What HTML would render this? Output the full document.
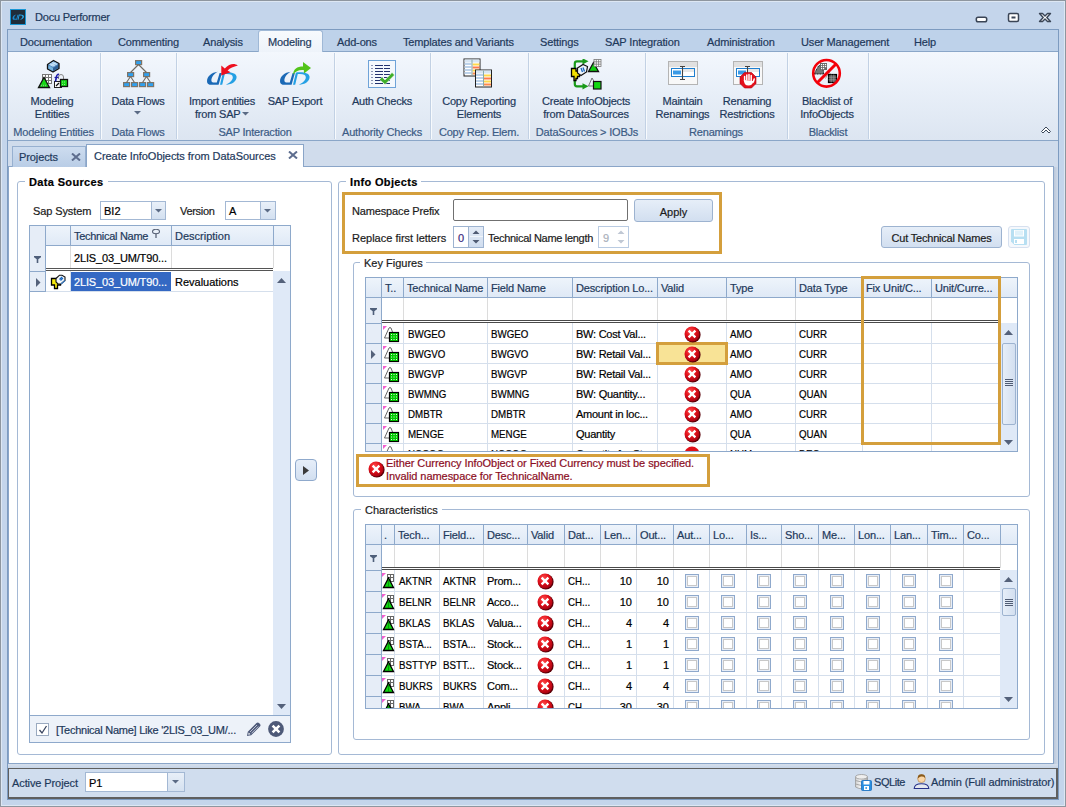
<!DOCTYPE html><html><head><meta charset="utf-8"><title>Docu Performer</title><style>
*{margin:0;padding:0;box-sizing:border-box}
html,body{width:1066px;height:807px;overflow:hidden;background:#c4d5eb;font-family:"Liberation Sans",sans-serif;font-size:11px;color:#1e395b}
.a{position:absolute}
.t{white-space:nowrap;line-height:13px;height:13px;-webkit-text-stroke:0.2px currentColor}
.nv{color:#1e395b}
.bk{color:#000}
.gl{color:#3b5b85}
.u{transform:scaleX(.885);transform-origin:0 0}
</style></head><body><div class="a " style="left:0px;top:0px;width:1066px;height:807px;border:1px solid #8e969f;background:#c4d5eb"></div>
<div class="a " style="left:1px;top:1px;width:1064px;height:805px;border:1px solid #dde7f3"></div>
<svg class="a" style="left:10px;top:9px" width="16" height="16" viewBox="0 0 16 16"><rect x="0" y="0" width="16" height="16" fill="#1996d4"/><rect x="1" y="1" width="14" height="14" fill="#1f2d3a"/><path d="M6.5 5.5 C4 5.8 2.5 7.5 2.5 9.3 C2.5 10.3 3.2 10.8 4.2 10.8 L7 10.8 L8.4 5.8 L7.5 5.8 L6.4 9.8 L4.9 9.8 C4.4 9.8 4.2 9.5 4.2 9.1 C4.2 7.7 5.1 6.3 6.5 5.5Z" fill="#1a8ad0"/><path d="M8.7 5.8 L9.6 5.8 L8.5 10.8 L7.6 10.8Z M8.9 5.5 C12 5.2 14 5.8 14 7.6 C14 9.6 12 10.6 9.6 10.8 C11 10 12.4 9 12.4 7.7 C12.4 6.6 11 6.2 8.9 6.5Z" fill="#2aa6e8"/></svg>
<div class="a t " style="left:35px;top:11px;color:#1e395b;letter-spacing:-0.2px">Docu Performer</div>
<svg class="a" style="left:970px;top:8px" width="90" height="18" viewBox="0 0 90 18"><rect x="6.3" y="9.3" width="10.4" height="4.4" rx="1.8" fill="#fff" stroke="#3a4556" stroke-width="1.5"/><rect x="38.5" y="5.5" width="10" height="8" rx="1.5" fill="#fff" stroke="#3a4556" stroke-width="1.5"/><rect x="41.5" y="8.5" width="4" height="2" fill="#3a4556"/><path d="M69.5 5.5 L72.5 5.5 L75 8 L77.5 5.5 L80.5 5.5 L76.8 9.5 L80.5 13.5 L77.5 13.5 L75 11 L72.5 13.5 L69.5 13.5 L73.2 9.5 Z" fill="#fff" stroke="#3a4556" stroke-width="1.4" stroke-linejoin="round"/></svg>
<div class="a " style="left:7px;top:29px;width:1052px;height:771px;border:1px solid #7d9bc0;background:#c4d5eb"></div>
<div class="a " style="left:8px;top:30px;width:1050px;height:21px;background:#bed2ea"></div>
<div class="a " style="left:8px;top:51px;width:1050px;height:1px;background:#8aa6c8"></div>
<div class="a " style="left:258px;top:30px;width:65px;height:22px;background:linear-gradient(#f7fafd,#eef3fa);border:1px solid #9fb8d6;border-bottom:0;border-radius:3px 3px 0 0"></div>
<div class="a t " style="left:20px;top:36px;letter-spacing:-0.15px">Documentation</div>
<div class="a t " style="left:118px;top:36px;letter-spacing:-0.15px">Commenting</div>
<div class="a t " style="left:203px;top:36px;letter-spacing:-0.15px">Analysis</div>
<div class="a t " style="left:268px;top:36px;letter-spacing:-0.15px">Modeling</div>
<div class="a t " style="left:337px;top:36px;letter-spacing:-0.15px">Add-ons</div>
<div class="a t " style="left:403px;top:36px;letter-spacing:-0.15px">Templates and Variants</div>
<div class="a t " style="left:540px;top:36px;letter-spacing:-0.15px">Settings</div>
<div class="a t " style="left:605px;top:36px;letter-spacing:-0.15px">SAP Integration</div>
<div class="a t " style="left:707px;top:36px;letter-spacing:-0.15px">Administration</div>
<div class="a t " style="left:801px;top:36px;letter-spacing:-0.15px">User Management</div>
<div class="a t " style="left:914px;top:36px;letter-spacing:-0.15px">Help</div>
<div class="a " style="left:8px;top:52px;width:1050px;height:88px;background:linear-gradient(#f3f7fd,#e8eff8 45%,#dce5f1)"></div>
<div class="a " style="left:8px;top:140px;width:1050px;height:1px;background:#8aa6c8"></div>
<div class="a " style="left:100px;top:53px;width:1px;height:86px;background:#c2d1e4"></div>
<div class="a " style="left:101px;top:53px;width:1px;height:86px;background:#f7fafd"></div>
<div class="a " style="left:176px;top:53px;width:1px;height:86px;background:#c2d1e4"></div>
<div class="a " style="left:177px;top:53px;width:1px;height:86px;background:#f7fafd"></div>
<div class="a " style="left:334px;top:53px;width:1px;height:86px;background:#c2d1e4"></div>
<div class="a " style="left:335px;top:53px;width:1px;height:86px;background:#f7fafd"></div>
<div class="a " style="left:430px;top:53px;width:1px;height:86px;background:#c2d1e4"></div>
<div class="a " style="left:431px;top:53px;width:1px;height:86px;background:#f7fafd"></div>
<div class="a " style="left:528px;top:53px;width:1px;height:86px;background:#c2d1e4"></div>
<div class="a " style="left:529px;top:53px;width:1px;height:86px;background:#f7fafd"></div>
<div class="a " style="left:645px;top:53px;width:1px;height:86px;background:#c2d1e4"></div>
<div class="a " style="left:646px;top:53px;width:1px;height:86px;background:#f7fafd"></div>
<div class="a " style="left:787px;top:53px;width:1px;height:86px;background:#c2d1e4"></div>
<div class="a " style="left:788px;top:53px;width:1px;height:86px;background:#f7fafd"></div>
<div class="a " style="left:868px;top:53px;width:1px;height:86px;background:#c2d1e4"></div>
<div class="a " style="left:869px;top:53px;width:1px;height:86px;background:#f7fafd"></div>
<div class="a t " style="left:-98px;width:300px;text-align:center;top:95px;letter-spacing:-0.2px">Modeling</div>
<div class="a t " style="left:-98px;width:300px;text-align:center;top:108px;letter-spacing:-0.2px">Entities</div>
<div class="a t " style="left:72px;width:300px;text-align:center;top:95px;letter-spacing:-0.2px">Import entities</div>
<div class="a t " style="left:145px;width:300px;text-align:center;top:95px;letter-spacing:-0.2px">SAP Export</div>
<div class="a t " style="left:232px;width:300px;text-align:center;top:95px;letter-spacing:-0.2px">Auth Checks</div>
<div class="a t " style="left:329px;width:300px;text-align:center;top:95px;letter-spacing:-0.2px">Copy Reporting</div>
<div class="a t " style="left:329px;width:300px;text-align:center;top:108px;letter-spacing:-0.2px">Elements</div>
<div class="a t " style="left:436px;width:300px;text-align:center;top:95px;letter-spacing:-0.2px">Create InfoObjects</div>
<div class="a t " style="left:436px;width:300px;text-align:center;top:108px;letter-spacing:-0.2px">from DataSources</div>
<div class="a t " style="left:532.5px;width:300px;text-align:center;top:95px;letter-spacing:-0.2px">Maintain</div>
<div class="a t " style="left:532.5px;width:300px;text-align:center;top:108px;letter-spacing:-0.2px">Renamings</div>
<div class="a t " style="left:597px;width:300px;text-align:center;top:95px;letter-spacing:-0.2px">Renaming</div>
<div class="a t " style="left:597px;width:300px;text-align:center;top:108px;letter-spacing:-0.2px">Restrictions</div>
<div class="a t " style="left:677px;width:300px;text-align:center;top:95px;letter-spacing:-0.2px">Blacklist of</div>
<div class="a t " style="left:677px;width:300px;text-align:center;top:108px;letter-spacing:-0.2px">InfoObjects</div>
<div class="a t " style="left:-12px;width:300px;text-align:center;top:95px;letter-spacing:-0.2px">Data Flows</div>
<div class="a t " style="left:195px;top:108px;letter-spacing:-0.2px">from SAP</div>
<svg class="a" style="left:134px;top:111px" width="7" height="4"><path d="M0 0 H7 L3.5 3.5Z" fill="#5b6b85"/></svg>
<svg class="a" style="left:242px;top:112px" width="7" height="4"><path d="M0 0 H7 L3.5 3.5Z" fill="#5b6b85"/></svg>
<div class="a t gl" style="left:-96.5px;width:300px;text-align:center;top:126px;letter-spacing:-0.2px">Modeling Entities</div>
<div class="a t gl" style="left:-12px;width:300px;text-align:center;top:126px;letter-spacing:-0.2px">Data Flows</div>
<div class="a t gl" style="left:105px;width:300px;text-align:center;top:126px;letter-spacing:-0.2px">SAP Interaction</div>
<div class="a t gl" style="left:232px;width:300px;text-align:center;top:126px;letter-spacing:-0.2px">Authority Checks</div>
<div class="a t gl" style="left:329px;width:300px;text-align:center;top:126px;letter-spacing:-0.2px">Copy Rep. Elem.</div>
<div class="a t gl" style="left:437px;width:300px;text-align:center;top:126px;letter-spacing:-0.2px">DataSources &gt; IOBJs</div>
<div class="a t gl" style="left:566px;width:300px;text-align:center;top:126px;letter-spacing:-0.2px">Renamings</div>
<div class="a t gl" style="left:678px;width:300px;text-align:center;top:126px;letter-spacing:-0.2px">Blacklist</div>
<svg class="a" style="left:1040px;top:125px" width="12" height="9" viewBox="0 0 12 9"><path d="M1.5 6.5 L6 2 L10.5 6.5 L9 8 L6 5 L3 8 Z" fill="#fff" stroke="#3c4a5c" stroke-width="1" stroke-linejoin="round"/></svg>
<svg class="a" style="left:36px;top:58px" width="34" height="32" viewBox="0 0 34 32"><path d="M11.5 6.5 L17.5 2.5 L23 5.5 L23 10.5 L17 14 L11.5 11 Z" fill="#4f86bd" stroke="#111" stroke-width="1.3" stroke-linejoin="round"/><path d="M12.5 6.5 L17.5 3.5 L22 5.8 L17 9 Z" fill="#9cc6ea"/><path d="M14 6 L19 8 M16 4.5 L21 6.5 M14.5 8 L19.5 5" stroke="#d8ecfa" stroke-width="0.7"/><path d="M12.5 7.5 L17 10 V13 L12.5 10.5Z" fill="#78b4dc"/><path d="M17 10 L22 7 V10 L17 13Z" fill="#2f5f94"/><g fill="#fff" stroke="#777" stroke-width="1"><rect x="6.5" y="16.5" width="9" height="9"/><path d="M6.5 19.5H15.5M6.5 22.5H15.5M9.5 16.5V25.5M12.5 16.5V25.5"/></g><path d="M2.5 29.5 L8 19.5 L13.5 29.5 Z" fill="#14d814" stroke="#111" stroke-width="1.3"/><path d="M5 27.5 H11" stroke="#7fbf7f" stroke-width="1.5" stroke-dasharray="1 1"/><path d="M22.5 21 V19 Q22.5 16.5 25 16.5 Q27.5 16.5 27.5 19 V21" fill="none" stroke="#888" stroke-width="1"/><rect x="18.5" y="23.5" width="7" height="6" fill="#fff" stroke="#222"/><path d="M20 28 L23 25" stroke="#111" stroke-width="1.2"/><rect x="24.5" y="21.5" width="7" height="7" fill="#18d818" stroke="#111" stroke-width="1.3"/><path d="M26 24 H30 M26 26.5 H30" stroke="#b8f5b8" stroke-width="0.7" stroke-dasharray="1 1"/><path d="M23 16.5 Q21 16 20.5 18.5 L19.5 23.5" fill="none" stroke="#1a1aa8" stroke-width="1.6"/><path d="M18.5 19.5H22.5" stroke="#1a1aa8" stroke-width="1.2"/></svg>
<svg class="a" style="left:122px;top:59px" width="34" height="30" viewBox="0 0 34 30"><g fill="#2fa0f0" stroke="#7d7468" stroke-width="1.2"><rect x="13.6" y="1.6" width="6" height="4"/><rect x="5.6" y="13.6" width="6" height="4"/><rect x="21.6" y="13.6" width="6" height="4"/><rect x="1.6" y="23.6" width="6" height="4"/><rect x="9.6" y="23.6" width="6" height="4"/><rect x="17.6" y="23.6" width="6" height="4"/><rect x="25.6" y="23.6" width="6" height="4"/></g><path d="M16.5 5.5 L8.5 13.5 M16.5 5.5 L24.5 13.5 M8.5 17.5 L4.5 23.5 M8.5 17.5 L12.5 23.5 M24.5 17.5 L20.5 23.5 M24.5 17.5 L28.5 23.5" stroke="#6f6a62" stroke-width="1.1"/></svg>
<svg class="a" style="left:203px;top:60px" width="40" height="28" viewBox="0 0 40 28"><path d="M14.8 11.8 C8.5 12.5 4 16.5 4 21.2 C4 23.8 5.8 24.8 8.5 24.8 L15.6 24.8 L18.9 13 L16.6 13 L13.8 22.4 L10.2 22.4 C9 22.4 8.4 21.6 8.4 20.6 C8.4 17 11 13.8 14.8 11.8 Z" fill="#1a69b6"/><path d="M19.8 13 L22 13 L19.2 24.8 L17 24.8 Z" fill="#24a0e4"/><path d="M20.3 12.3 C28 11.6 33.6 13 33.6 17 C33.6 21.5 29 24.5 22.8 24.8 C26.5 22.8 29.8 20.5 29.8 17.2 C29.8 14.6 26.5 13.6 20.6 14.3 Z" fill="#24a0e4"/><path d="M18.3 5.5 L18.3 15.6 L27.6 12.3 L24.6 10.6 C27 7.8 30.5 6.6 34.8 5.4 C31.5 3 26.5 3.2 21.8 8.6 Z" fill="#ee1020"/></svg>
<svg class="a" style="left:276px;top:60px" width="40" height="28" viewBox="0 0 40 28"><path d="M14.8 11.8 C8.5 12.5 4 16.5 4 21.2 C4 23.8 5.8 24.8 8.5 24.8 L15.6 24.8 L18.9 13 L16.6 13 L13.8 22.4 L10.2 22.4 C9 22.4 8.4 21.6 8.4 20.6 C8.4 17 11 13.8 14.8 11.8 Z" fill="#1a69b6"/><path d="M19.8 13 L22 13 L19.2 24.8 L17 24.8 Z" fill="#24a0e4"/><path d="M20.3 12.3 C28 11.6 33.6 13 33.6 17 C33.6 21.5 29 24.5 22.8 24.8 C26.5 22.8 29.8 20.5 29.8 17.2 C29.8 14.6 26.5 13.6 20.6 14.3 Z" fill="#24a0e4"/><path d="M17 14.8 C17.5 9 21 6.5 27 6.5 L27 2 L35 8 L28 13.5 L27.8 10 C23 9.5 19.5 11 17 14.8Z" fill="#52c41a"/></svg>
<svg class="a" style="left:368px;top:60px" width="28" height="28" viewBox="0 0 28 28"><rect x="0.5" y="0.5" width="27" height="27" fill="#f4f8fd" stroke="#6fa3d8"/><rect x="3.5" y="5" width="1" height="1" fill="#23326e"/><rect x="7" y="5" width="8" height="1" fill="#23326e"/><rect x="16" y="5" width="6" height="1" fill="#23326e"/><rect x="3.5" y="8" width="1" height="1" fill="#23326e"/><rect x="7" y="8" width="8" height="1" fill="#23326e"/><rect x="16" y="8" width="6" height="1" fill="#23326e"/><rect x="3.5" y="11" width="1" height="1" fill="#23326e"/><rect x="7" y="11" width="8" height="1" fill="#23326e"/><rect x="16" y="11" width="6" height="1" fill="#23326e"/><rect x="3.5" y="14" width="1" height="1" fill="#23326e"/><rect x="7" y="14" width="8" height="1" fill="#23326e"/><rect x="16" y="14" width="6" height="1" fill="#23326e"/><rect x="3.5" y="17" width="1" height="1" fill="#23326e"/><rect x="7" y="17" width="8" height="1" fill="#23326e"/><rect x="16" y="17" width="6" height="1" fill="#23326e"/><rect x="3.5" y="20" width="1" height="1" fill="#23326e"/><rect x="7" y="20" width="8" height="1" fill="#23326e"/><rect x="16" y="20" width="6" height="1" fill="#23326e"/><rect x="3.5" y="23" width="1" height="1" fill="#23326e"/><rect x="7" y="23" width="8" height="1" fill="#23326e"/><rect x="16" y="23" width="6" height="1" fill="#23326e"/><path d="M11.5 19.5 L14 17 L17 20 L24 12.5 L26.5 15 L17 24.5 Z" fill="#3fae2a" stroke="#fff" stroke-width="0.5"/></svg>
<svg class="a" style="left:463px;top:58px" width="31" height="31" viewBox="0 0 31 31"><g transform="translate(0.5,0.5)"><rect x="0.5" y="0.5" width="16" height="17" fill="#fff" stroke="#222"/><rect x="1" y="1" width="15" height="3" fill="#d8e6f4"/><rect x="1" y="4.5" width="7" height="2" fill="#bcd2ea"/><rect x="1" y="7.5" width="7" height="2" fill="#bcd2ea"/><rect x="1" y="10.5" width="7" height="2" fill="#bcd2ea"/><rect x="1" y="13.5" width="7" height="2" fill="#bcd2ea"/><rect x="9" y="5" width="7" height="2" fill="#ffd84a"/><rect x="9" y="8" width="7" height="2" fill="#ff7a4a"/><rect x="9" y="11" width="7" height="2" fill="#ffd84a"/><rect x="9" y="14" width="7" height="2" fill="#ff8a4a"/><path d="M8.5 1 V17" stroke="#8aa"/></g><g transform="translate(12,11.5)"><rect x="0.5" y="0.5" width="16" height="17" fill="#fff" stroke="#222"/><rect x="1" y="1" width="15" height="3" fill="#d8e6f4"/><rect x="1" y="4.5" width="7" height="2" fill="#bcd2ea"/><rect x="1" y="7.5" width="7" height="2" fill="#bcd2ea"/><rect x="1" y="10.5" width="7" height="2" fill="#bcd2ea"/><rect x="1" y="13.5" width="7" height="2" fill="#bcd2ea"/><rect x="9" y="5" width="7" height="2" fill="#ffd84a"/><rect x="9" y="8" width="7" height="2" fill="#ff7a4a"/><rect x="9" y="11" width="7" height="2" fill="#ffd84a"/><rect x="9" y="14" width="7" height="2" fill="#ff8a4a"/><path d="M8.5 1 V17" stroke="#8aa"/></g></svg>
<svg class="a" style="left:570px;top:59px" width="33" height="33" viewBox="0 0 33 33"><path d="M4.8 10.5 V4.5 Q4.8 2.3 7 2.3 H13.5" fill="none" stroke="#1a9a1a" stroke-width="2.2"/><path d="M12.5 -0.8 L18.5 2.3 L12.5 5.4Z" fill="#1a9a1a"/><path d="M4.8 21.5 V25 Q4.8 27.3 7 27.3 H13.5" fill="none" stroke="#1a9a1a" stroke-width="2.2"/><path d="M12.5 24.2 L18.5 27.3 L12.5 30.4Z" fill="#1a9a1a"/><path d="M1.5 9.5 H6 V12 H9.5 V17.5 L7.5 17.5 V19.5 H6 V21.5 H4 V17.5 H1.5Z" fill="#f2e000" stroke="#000" stroke-width="1.3"/><path d="M7.5 9 L13 5.5 L17.5 7.5 L16.5 13 L11 16.5 L7.5 14Z" fill="#eef4fa" stroke="#111" stroke-width="1.2"/><path d="M11 9 L12.5 13 M13 8.5 L14.5 12.5" stroke="#1565c0" stroke-width="1.3"/><path d="M18.5 12.5 L23.5 3.5 L28.5 12.5Z" fill="#10d010" stroke="#111" stroke-width="1.3"/><g fill="#fff" stroke="#777" stroke-width="0.8"><rect x="24" y="0.5" width="7" height="7"/><path d="M24 2.8H31M24 5.2H31M26.3 0.5V7.5M28.6 0.5V7.5"/></g><path d="M18.5 27 L22 19 L25 24" fill="none" stroke="#666" stroke-width="0.9"/><path d="M18.5 27 H23" stroke="#666" stroke-width="0.9"/><rect x="23.5" y="22.5" width="7.5" height="7.5" fill="#12d812" stroke="#111" stroke-width="1.2"/></svg>
<svg class="a" style="left:668px;top:61px" width="31" height="25" viewBox="0 0 31 25"><rect x="1" y="1" width="29" height="23" fill="#7a7a7a" opacity="0.35"/><rect x="0.5" y="0.5" width="29" height="23" fill="#f8f8f8" stroke="#b4b4b4"/><rect x="1" y="1" width="28" height="5" fill="#e0e0e0"/><rect x="3" y="7" width="24" height="9" fill="#1e7fd0"/><rect x="4" y="8" width="22" height="7" fill="#fff"/><rect x="15" y="8" width="11" height="3" fill="#e8e8e8"/><rect x="5" y="9.5" width="8" height="4" fill="#3a9ae6"/><path d="M12 5.5 H17 M14.5 5.5 V18.5 M12 18.5 H17" stroke="#444" stroke-width="1.1"/></svg>
<svg class="a" style="left:733px;top:61px" width="31" height="28" viewBox="0 0 31 28"><rect x="1" y="1" width="29" height="23" fill="#7a7a7a" opacity="0.35"/><rect x="0.5" y="0.5" width="29" height="23" fill="#f8f8f8" stroke="#b4b4b4"/><rect x="1" y="1" width="28" height="5" fill="#e0e0e0"/><rect x="3" y="7" width="24" height="9" fill="#1e7fd0"/><rect x="4" y="8" width="22" height="7" fill="#fff"/><rect x="15" y="8" width="11" height="3" fill="#e8e8e8"/><rect x="5" y="9.5" width="8" height="4" fill="#3a9ae6"/><path d="M12 5.5 H17 M14.5 5.5 V18.5 M12 18.5 H17" stroke="#444" stroke-width="1.1"/><path d="M11.5 11.5 H18.5 L23 16 V22.5 L18.5 27 H11.5 L7 22.5 V16Z" fill="#e4101c" stroke="#b00010" stroke-width="0.6"/><path d="M11.6 20 V15.5 M13.8 19 V14 M16 19 V13.5 M18.2 19.5 V14.5 M20.3 21 L21.2 18" stroke="#fff" stroke-width="1.5" stroke-linecap="round"/><path d="M10.8 19 Q11 24.5 15.5 24.5 Q19.5 24.5 20.5 20Z" fill="#fff"/></svg>
<svg class="a" style="left:810px;top:57px" width="32" height="32" viewBox="0 0 32 32"><path d="M4 17 L8.5 9 Q9.5 8 10.5 9 L13.5 14 L13.5 17Z" fill="#777" stroke="#111" stroke-width="1" stroke-dasharray="1 0.6"/><rect x="10" y="6" width="7" height="7" fill="#666"/><g fill="#fff"><rect x="11" y="7" width="1.2" height="1.2"/><rect x="13" y="7" width="1.2" height="1.2"/><rect x="15" y="7" width="1.2" height="1.2"/><rect x="11" y="9" width="1.2" height="1.2"/><rect x="13" y="9" width="1.2" height="1.2"/><rect x="15" y="9" width="1.2" height="1.2"/><rect x="11" y="11" width="1.2" height="1.2"/><rect x="13" y="11" width="1.2" height="1.2"/></g><path d="M15.5 21.5 L19 15 L21 18" fill="#fff" stroke="#888" stroke-width="0.8"/><rect x="18.5" y="17.5" width="8" height="8" fill="#555" stroke="#000" stroke-width="1.2"/><path d="M18.5 20.2H26.5M18.5 22.8H26.5M21.2 17.5V25.5M23.8 17.5V25.5" stroke="#aaa" stroke-width="0.6"/><circle cx="16.5" cy="16.3" r="13.3" fill="none" stroke="#f4000a" stroke-width="2.6"/><path d="M7 26 L26 7" stroke="#f4000a" stroke-width="3"/></svg>
<div class="a " style="left:8px;top:141px;width:1050px;height:26px;background:#d0dcec"></div>
<div class="a " style="left:8px;top:166px;width:1046px;height:1px;background:#8aa5c8"></div>
<div class="a " style="left:12px;top:146px;width:74px;height:21px;background:linear-gradient(#cddcef,#b9cde6);border:1px solid #97b0d0;border-bottom:0"></div>
<div class="a t " style="left:19px;top:151px;letter-spacing:-0.1px">Projects</div>
<svg class="a" style="left:71px;top:153px" width="10" height="8" viewBox="0 0 10 8"><path d="M1 0.5 L9 7.5 M9 0.5 L1 7.5" stroke="#5d6d8e" stroke-width="2"/></svg>
<div class="a " style="left:86px;top:144px;width:218px;height:23px;background:#fff;border:1px solid #8aa5c8;border-bottom:0"></div>
<div class="a t " style="left:94px;top:150px;letter-spacing:-0.05px">Create InfoObjects from DataSources</div>
<svg class="a" style="left:288px;top:151px" width="10" height="8" viewBox="0 0 10 8"><path d="M1 0.5 L9 7.5 M9 0.5 L1 7.5" stroke="#5d6d8e" stroke-width="2"/></svg>
<div class="a " style="left:8px;top:167px;width:1046px;height:597px;background:#fff;border:1px solid #8aa5c8;border-top:0"></div>
<div class="a " style="left:1054px;top:167px;width:4px;height:597px;background:linear-gradient(90deg,#bcc8da,#cfdbea)"></div>
<div class="a " style="left:8px;top:764px;width:1050px;height:4px;background:linear-gradient(#d5dfec,#c7d5e7)"></div>
<div class="a " style="left:8px;top:768px;width:1050px;height:31px;background:#d0ddee;border:1px solid #5f5f5f;border-right:2px solid #5f5f5f;border-bottom:2px solid #5f5f5f"></div>
<div class="a t " style="left:12px;top:777px;letter-spacing:-0.1px">Active Project</div>
<div class="a " style="left:85px;top:772px;width:100px;height:20px;background:#fff;border:1px solid #a3b8d4"></div>
<div class="a t " style="left:89px;top:777px;color:#000">P1</div>
<div class="a " style="left:167px;top:773px;width:17px;height:18px;background:linear-gradient(#e8eff8,#d5e1f0);border-left:1px solid #a3b8d4"></div>
<svg class="a" style="left:172px;top:780px" width="7" height="4"><path d="M0 0 H7 L3.5 3.5Z" fill="#5b6b85"/></svg>
<svg class="a" style="left:855px;top:774px" width="18" height="17" viewBox="0 0 18 17"><defs><linearGradient id="dbg" x1="0" x2="1"><stop offset="0" stop-color="#cfcfcf"/><stop offset="0.4" stop-color="#f4f4f4"/><stop offset="1" stop-color="#a8a8a8"/></linearGradient></defs><path d="M0.5 2.8 V13 Q6.5 16.5 12.5 13 V2.8" fill="url(#dbg)" stroke="#9a9a9a" stroke-width="0.8"/><ellipse cx="6.5" cy="2.8" rx="6" ry="2.3" fill="#eee" stroke="#9a9a9a" stroke-width="0.8"/><path d="M0.5 6.5 Q6.5 9.5 12.5 6.5 M0.5 10 Q6.5 13 12.5 10" fill="none" stroke="#9a9a9a" stroke-width="0.8"/><rect x="6.5" y="6.5" width="10" height="10" rx="1" fill="#2a8fe0" stroke="#1a70c0" stroke-width="0.8"/><rect x="8.5" y="7" width="6" height="3.5" fill="#fff"/><rect x="9" y="12" width="5" height="4" fill="#fff"/><rect x="10.5" y="13" width="1.3" height="2" fill="#2a8fe0"/></svg>
<div class="a t " style="left:874px;top:776px;letter-spacing:-0.45px">SQLite</div>
<svg class="a" style="left:913px;top:773px" width="17" height="17" viewBox="0 0 17 17"><path d="M1.2 15.5 Q1.5 10.8 8.5 10.8 Q15.5 10.8 15.8 15.5 Z" fill="#e4e8f0" stroke="#27338a" stroke-width="1.1"/><circle cx="8.5" cy="5.8" r="3.8" fill="#fbd6a6" stroke="#b07a3a" stroke-width="0.6"/><path d="M4.8 5.5 Q4.5 1 8.8 1.3 Q12.5 1.5 12.2 5 Q10.5 3.2 8 3.6 Q6.3 4 4.8 5.5Z" fill="#8a5a1a"/></svg>
<div class="a t " style="left:931px;top:776px;letter-spacing:-0.1px">Admin (Full administrator)</div>
<div class="a " style="left:17px;top:181px;width:315px;height:574px;border:1px solid #a5b9d5;border-radius:3px"></div>
<div class="a " style="left:25px;top:179px;width:83px;height:4px;background:#fff"></div>
<div class="a t " style="left:29px;top:176px;font-weight:bold;color:#000;letter-spacing:0.35px">Data Sources</div>
<div class="a t " style="left:33px;top:205px;letter-spacing:-0.1px;color:#1b1b1b">Sap System</div>
<div class="a " style="left:100px;top:201px;width:66px;height:19px;background:#fff;border:1px solid #a3b8d4"></div>
<div class="a t " style="left:104px;top:205px;color:#000">BI2</div>
<div class="a " style="left:151px;top:202px;width:14px;height:17px;background:linear-gradient(#e9f0f9,#d3e0f0);border-left:1px solid #a3b8d4"></div>
<svg class="a" style="left:155px;top:209px" width="7" height="4"><path d="M0 0 H7 L3.5 3.5Z" fill="#5b6b85"/></svg>
<div class="a t " style="left:180px;top:205px;color:#1b1b1b;letter-spacing:-0.3px">Version</div>
<div class="a " style="left:225px;top:201px;width:51px;height:19px;background:#fff;border:1px solid #a3b8d4"></div>
<div class="a t " style="left:229px;top:205px;color:#000">A</div>
<div class="a " style="left:260px;top:202px;width:15px;height:17px;background:linear-gradient(#e9f0f9,#d3e0f0);border-left:1px solid #a3b8d4"></div>
<svg class="a" style="left:264px;top:209px" width="7" height="4"><path d="M0 0 H7 L3.5 3.5Z" fill="#5b6b85"/></svg>
<div class="a " style="left:29px;top:225px;width:262px;height:491px;background:#fff;border:1px solid #8ea9cb"></div>
<div class="a " style="left:30px;top:226px;width:260px;height:20px;background:linear-gradient(#eef4fb,#dfe9f6)"></div>
<div class="a " style="left:30px;top:245px;width:260px;height:1px;background:#8ea9cb"></div>
<div class="a " style="left:30px;top:226px;width:16px;height:66px;background:#e6edf7"></div>
<div class="a " style="left:45px;top:226px;width:1px;height:20px;background:#8ea9cb"></div>
<div class="a " style="left:70px;top:226px;width:1px;height:20px;background:#8ea9cb"></div>
<div class="a " style="left:171px;top:226px;width:1px;height:20px;background:#8ea9cb"></div>
<div class="a " style="left:273px;top:226px;width:1px;height:20px;background:#8ea9cb"></div>
<div class="a " style="left:45px;top:246px;width:1px;height:45px;background:#e6edf7;border-left:1px solid #8ea9cb"></div>
<div class="a " style="left:30px;top:271px;width:16px;height:1px;background:#8ea9cb"></div>
<div class="a " style="left:30px;top:291px;width:16px;height:1px;background:#8ea9cb"></div>
<div class="a " style="left:70px;top:246px;width:1px;height:22px;background:#dcdcdc"></div>
<div class="a " style="left:171px;top:246px;width:1px;height:22px;background:#dcdcdc"></div>
<div class="a " style="left:273px;top:246px;width:1px;height:22px;background:#dcdcdc"></div>
<div class="a " style="left:46px;top:268px;width:227px;height:1px;background:#555"></div>
<div class="a " style="left:46px;top:270px;width:227px;height:1px;background:#555"></div>
<div class="a t " style="left:74px;top:230px;letter-spacing:-0.3px">Technical Name</div>
<svg class="a" style="left:152px;top:229px" width="8" height="9" viewBox="0 0 8 9"><ellipse cx="4" cy="2.5" rx="3.5" ry="2.2" fill="none" stroke="#5a6478" stroke-width="1.1"/><path d="M4 4.5 V9" stroke="#5a6478" stroke-width="1.3"/></svg>
<div class="a t " style="left:175px;top:230px;">Description</div>
<svg class="a" style="left:34px;top:256px" width="8" height="8" viewBox="0 0 8 8"><path d="M0 0 H7 V1.2 L4.3 3.2 V7 H2.7 V3.2 L0 1.2Z" fill="#4f5f7a"/></svg>
<div class="a t " style="left:74px;top:252px;color:#000;letter-spacing:-0.15px">2LIS_03_UM/T90...</div>
<div class="a " style="left:71px;top:272px;width:100px;height:19px;background:#3468c3"></div>
<div class="a t " style="left:74px;top:276px;color:#fff;letter-spacing:-0.15px">2LIS_03_UM/T90...</div>
<div class="a t " style="left:175px;top:276px;color:#000">Revaluations</div>
<div class="a " style="left:46px;top:291px;width:227px;height:1px;background:#d5dfec"></div>
<div class="a " style="left:70px;top:271px;width:1px;height:20px;background:#d5dfec"></div>
<svg class="a" style="left:36px;top:278px" width="5" height="9"><path d="M0 0 L4.5 4.5 L0 9Z" fill="#54617a"/></svg>
<svg class="a" style="left:50px;top:274px" width="16" height="16" viewBox="0 0 16 16"><path d="M1.5 4.5 H7.5 V8 H10.5 V11 H7.5 V14.5 H4.5 V11 H1.5Z" fill="#f6ea10" stroke="#000" stroke-width="1.3"/><path d="M6 4.5 L9.5 1.2 H12 L15 3 V6.5 L11 10 L8 10 L6 8Z" fill="#f4f8fc" stroke="#111" stroke-width="1.1"/><path d="M9.5 5.5 L12 3 M10.5 6.5 L13 4" stroke="#1565c0" stroke-width="1.2"/><path d="M11 10 L15 6.5" stroke="#3a7ac0" stroke-width="1.3"/></svg>
<div class="a " style="left:273px;top:271px;width:17px;height:444px;background:#dfe9f7"></div>
<svg class="a" style="left:277px;top:278px" width="9" height="5"><path d="M0 5 L4.5 0 L9 5Z" fill="#54617a"/></svg>
<svg class="a" style="left:277px;top:704px" width="9" height="5"><path d="M0 0 H9 L4.5 5Z" fill="#54617a"/></svg>
<div class="a " style="left:29px;top:715px;width:262px;height:28px;background:#edf2f9;border:1px solid #8ea9cb"></div>
<div class="a " style="left:36px;top:723px;width:13px;height:13px;background:#fff;border:1px solid #9aaac0"></div>
<svg class="a" style="left:38px;top:725px" width="10" height="10" viewBox="0 0 10 10"><path d="M1.5 5 L4 8 L8.5 1" fill="none" stroke="#3a4660" stroke-width="1.3"/></svg>
<div class="a t " style="left:56px;top:724px;letter-spacing:-0.25px">[Technical Name] Like '2LIS_03_UM/...</div>
<svg class="a" style="left:246px;top:721px" width="16" height="16" viewBox="0 0 16 16"><path d="M1 15 L1.8 10.8 L10.5 2.1 Q11.8 0.8 13.2 2.2 L13.8 2.8 Q15.2 4.2 13.9 5.5 L5.2 14.2 Z" fill="#4e5a7a"/><path d="M2.2 13.8 L2.7 11.5 L4.5 13.3Z" fill="#fff"/><path d="M4 11 L11 4 M5.5 12.3 L12.3 5.5" stroke="#d8dde8" stroke-width="0.8"/></svg>
<svg class="a" style="left:268px;top:721px" width="16" height="16" viewBox="0 0 16 16"><circle cx="8" cy="8" r="7.9" fill="#4e5a78"/><path d="M4.6 4.6 L11.4 11.4 M11.4 4.6 L4.6 11.4" stroke="#fff" stroke-width="2.6"/></svg>
<div class="a " style="left:295px;top:459px;width:22px;height:22px;background:linear-gradient(#e6eef9,#d2dff0);border:1px solid #8fa9cc;border-radius:4px"></div>
<svg class="a" style="left:303px;top:466px" width="6" height="9"><path d="M0 0 L6 4.5 L0 9Z" fill="#3a3a3a"/></svg>
<div class="a " style="left:338px;top:181px;width:707px;height:574px;border:1px solid #a5b9d5;border-radius:3px"></div>
<div class="a " style="left:346px;top:179px;width:75px;height:4px;background:#fff"></div>
<div class="a t " style="left:350px;top:176px;font-weight:bold;color:#000;letter-spacing:0.35px">Info Objects</div>
<div class="a " style="left:342px;top:192px;width:380px;height:62px;border:3px solid #d49f3c"></div>
<div class="a t " style="left:352px;top:205px;letter-spacing:-0.15px;color:#1b1b1b">Namespace Prefix</div>
<div class="a " style="left:453px;top:199px;width:175px;height:22px;background:#fff;border:1px solid #707070;border-radius:2px"></div>
<div class="a " style="left:634px;top:199px;width:79px;height:23px;background:linear-gradient(#e6eef8,#d2dff0);border:1px solid #9db3d0;border-radius:3px"></div>
<div class="a t " style="left:523.5px;width:300px;text-align:center;top:206px;color:#1b1b1b">Apply</div>
<div class="a t " style="left:352px;top:232px;letter-spacing:0px;color:#1b1b1b">Replace first letters</div>
<div class="a " style="left:453px;top:226px;width:31px;height:22px;background:#fff;border:1px solid #9db3d0"></div>
<div class="a t " style="left:458px;top:232px;color:#3a2a80">0</div>
<div class="a " style="left:468px;top:227px;width:15px;height:20px;background:linear-gradient(#e4ecf7,#d0ddef);border-left:1px solid #9db3d0"></div>
<div class="a " style="left:470px;top:236px;width:13px;height:1px;background:#f0f5fb"></div>
<svg class="a" style="left:472px;top:230px" width="8" height="14"><path d="M0.5 4 L4 0.5 L7.5 4Z M0.5 10 H7.5 L4 13.5Z" fill="#4f5b73"/></svg>
<div class="a t " style="left:488px;top:232px;letter-spacing:-0.3px;color:#1b1b1b">Technical Name length</div>
<div class="a " style="left:598px;top:226px;width:31px;height:22px;background:#fff;border:1px solid #b9cbe2"></div>
<div class="a t " style="left:603px;top:232px;color:#aab0bb">9</div>
<svg class="a" style="left:617px;top:230px" width="8" height="14"><path d="M0.5 4 L4 0.5 L7.5 4Z M0.5 10 H7.5 L4 13.5Z" fill="#c0c8d4"/></svg>
<div class="a " style="left:881px;top:226px;width:121px;height:22px;background:linear-gradient(#e6eef8,#d2dff0);border:1px solid #9db3d0;border-radius:3px"></div>
<div class="a t " style="left:791.5px;width:300px;text-align:center;top:232px;letter-spacing:-0.2px;color:#1b1b1b">Cut Technical Names</div>
<div class="a " style="left:1008px;top:226px;width:22px;height:22px;border:1px solid #d6e0ef;border-radius:3px;background:#f5f8fc"></div>
<svg class="a" style="left:1011px;top:229px" width="16" height="16" viewBox="0 0 16 16"><path d="M1 0 H15 Q16 0 16 1 V15 Q16 16 15 16 H3.5 L0 12.5 V1 Q0 0 1 0Z" fill="#b7dff2"/><rect x="3" y="1" width="10" height="6.5" fill="#fff"/><rect x="4" y="1.5" width="8" height="5" fill="#dff1fa"/><rect x="3" y="10" width="10" height="5" fill="#fff"/><rect x="4.2" y="11" width="1.6" height="3" fill="#a8d8ef"/></svg>
<svg width="0" height="0" style="position:absolute"><defs><radialGradient id="rg" cx="0.4" cy="0.3" r="0.75"><stop offset="0" stop-color="#ff4a4a"/><stop offset="0.5" stop-color="#e0101a"/><stop offset="1" stop-color="#a00010"/></radialGradient></defs></svg>
<div class="a " style="left:353px;top:262px;width:677px;height:235px;border:1px solid #a5b9d5;border-radius:3px"></div>
<div class="a " style="left:360px;top:260px;width:66px;height:4px;background:#fff"></div>
<div class="a t " style="left:364px;top:257px;color:#1b1b1b">Key Figures</div>
<div class="a " style="left:365px;top:277px;width:653px;height:175px;background:#fff;border:1px solid #8ea9cb"></div>
<div class="a " style="left:366px;top:278px;width:651px;height:19px;background:linear-gradient(#eef4fb,#dfe9f6)"></div>
<div class="a " style="left:366px;top:297px;width:651px;height:1px;background:#8ea9cb"></div>
<div class="a " style="left:381px;top:278px;width:1px;height:19px;background:#8ea9cb"></div>
<div class="a " style="left:403px;top:278px;width:1px;height:19px;background:#8ea9cb"></div>
<div class="a " style="left:487px;top:278px;width:1px;height:19px;background:#8ea9cb"></div>
<div class="a " style="left:572px;top:278px;width:1px;height:19px;background:#8ea9cb"></div>
<div class="a " style="left:657px;top:278px;width:1px;height:19px;background:#8ea9cb"></div>
<div class="a " style="left:726px;top:278px;width:1px;height:19px;background:#8ea9cb"></div>
<div class="a " style="left:795px;top:278px;width:1px;height:19px;background:#8ea9cb"></div>
<div class="a " style="left:862px;top:278px;width:1px;height:19px;background:#8ea9cb"></div>
<div class="a " style="left:931px;top:278px;width:1px;height:19px;background:#8ea9cb"></div>
<div class="a " style="left:1000px;top:278px;width:1px;height:19px;background:#8ea9cb"></div>
<div class="a " style="left:366px;top:298px;width:16px;height:153px;background:#e6edf7"></div>
<div class="a " style="left:381px;top:298px;width:1px;height:153px;background:#8ea9cb"></div>
<div class="a " style="left:366px;top:323px;width:15px;height:1px;background:#8ea9cb"></div>
<div class="a " style="left:403px;top:298px;width:1px;height:23px;background:#dcdcdc"></div>
<div class="a " style="left:487px;top:298px;width:1px;height:23px;background:#dcdcdc"></div>
<div class="a " style="left:572px;top:298px;width:1px;height:23px;background:#dcdcdc"></div>
<div class="a " style="left:657px;top:298px;width:1px;height:23px;background:#dcdcdc"></div>
<div class="a " style="left:726px;top:298px;width:1px;height:23px;background:#dcdcdc"></div>
<div class="a " style="left:795px;top:298px;width:1px;height:23px;background:#dcdcdc"></div>
<div class="a " style="left:862px;top:298px;width:1px;height:23px;background:#dcdcdc"></div>
<div class="a " style="left:931px;top:298px;width:1px;height:23px;background:#dcdcdc"></div>
<div class="a " style="left:1000px;top:298px;width:1px;height:23px;background:#dcdcdc"></div>
<div class="a " style="left:382px;top:320px;width:618px;height:1px;background:#4a4a4a"></div>
<div class="a " style="left:382px;top:322px;width:618px;height:1px;background:#4a4a4a"></div>
<svg class="a" style="left:370px;top:308px" width="8" height="8" viewBox="0 0 8 8"><path d="M0 0 H7 V1.2 L4.3 3.2 V7 H2.7 V3.2 L0 1.2Z" fill="#4f5f7a"/></svg>
<div class="a " style="left:382px;top:343px;width:618px;height:1px;background:#d5dfec"></div>
<div class="a " style="left:366px;top:343px;width:15px;height:1px;background:#8ea9cb"></div>
<div class="a " style="left:382px;top:363px;width:618px;height:1px;background:#d5dfec"></div>
<div class="a " style="left:366px;top:363px;width:15px;height:1px;background:#8ea9cb"></div>
<div class="a " style="left:382px;top:383px;width:618px;height:1px;background:#d5dfec"></div>
<div class="a " style="left:366px;top:383px;width:15px;height:1px;background:#8ea9cb"></div>
<div class="a " style="left:382px;top:403px;width:618px;height:1px;background:#d5dfec"></div>
<div class="a " style="left:366px;top:403px;width:15px;height:1px;background:#8ea9cb"></div>
<div class="a " style="left:382px;top:423px;width:618px;height:1px;background:#d5dfec"></div>
<div class="a " style="left:366px;top:423px;width:15px;height:1px;background:#8ea9cb"></div>
<div class="a " style="left:382px;top:443px;width:618px;height:1px;background:#d5dfec"></div>
<div class="a " style="left:366px;top:443px;width:15px;height:1px;background:#8ea9cb"></div>
<div class="a " style="left:403px;top:323px;width:1px;height:128px;background:#d5dfec"></div>
<div class="a " style="left:487px;top:323px;width:1px;height:128px;background:#d5dfec"></div>
<div class="a " style="left:572px;top:323px;width:1px;height:128px;background:#d5dfec"></div>
<div class="a " style="left:657px;top:323px;width:1px;height:128px;background:#d5dfec"></div>
<div class="a " style="left:726px;top:323px;width:1px;height:128px;background:#d5dfec"></div>
<div class="a " style="left:795px;top:323px;width:1px;height:128px;background:#d5dfec"></div>
<div class="a " style="left:862px;top:323px;width:1px;height:128px;background:#d5dfec"></div>
<div class="a " style="left:931px;top:323px;width:1px;height:128px;background:#d5dfec"></div>
<div class="a " style="left:1000px;top:323px;width:1px;height:128px;background:#d5dfec"></div>
<div class="a " style="left:1000px;top:323px;width:17px;height:128px;background:#dfe9f7"></div>
<div class="a t " style="left:385px;top:282px;letter-spacing:-0.15px">T..</div>
<div class="a t " style="left:407px;top:282px;letter-spacing:-0.15px">Technical Name</div>
<div class="a t " style="left:491px;top:282px;letter-spacing:-0.15px">Field Name</div>
<div class="a t " style="left:576px;top:282px;letter-spacing:-0.15px">Description Lo...</div>
<div class="a t " style="left:661px;top:282px;letter-spacing:-0.15px">Valid</div>
<div class="a t " style="left:730px;top:282px;letter-spacing:-0.15px">Type</div>
<div class="a t " style="left:799px;top:282px;letter-spacing:-0.15px">Data Type</div>
<div class="a t " style="left:866px;top:282px;letter-spacing:-0.15px">Fix Unit/C...</div>
<div class="a t " style="left:935px;top:282px;letter-spacing:-0.15px">Unit/Curre...</div>
<div class="a" style="left:366px;top:323px;width:634px;height:128px;overflow:hidden">
<div class="a t u" style="left:42px;top:5px;color:#000">BWGEO</div>
<div class="a t u" style="left:125px;top:5px;color:#000">BWGEO</div>
<div class="a t" style="left:210px;top:5px;color:#000;letter-spacing:-0.25px">BW: Cost Val...</div>
<div class="a t u" style="left:364px;top:5px;color:#000">AMO</div>
<div class="a t u" style="left:433px;top:5px;color:#000">CURR</div>
<div class="a t u" style="left:42px;top:25px;color:#000">BWGVO</div>
<div class="a t u" style="left:125px;top:25px;color:#000">BWGVO</div>
<div class="a t" style="left:210px;top:25px;color:#000;letter-spacing:-0.25px">BW: Retail Val...</div>
<div class="a t u" style="left:364px;top:25px;color:#000">AMO</div>
<div class="a t u" style="left:433px;top:25px;color:#000">CURR</div>
<div class="a t u" style="left:42px;top:45px;color:#000">BWGVP</div>
<div class="a t u" style="left:125px;top:45px;color:#000">BWGVP</div>
<div class="a t" style="left:210px;top:45px;color:#000;letter-spacing:-0.25px">BW: Retail Val...</div>
<div class="a t u" style="left:364px;top:45px;color:#000">AMO</div>
<div class="a t u" style="left:433px;top:45px;color:#000">CURR</div>
<div class="a t u" style="left:42px;top:65px;color:#000">BWMNG</div>
<div class="a t u" style="left:125px;top:65px;color:#000">BWMNG</div>
<div class="a t" style="left:210px;top:65px;color:#000;letter-spacing:-0.25px">BW: Quantity...</div>
<div class="a t u" style="left:364px;top:65px;color:#000">QUA</div>
<div class="a t u" style="left:433px;top:65px;color:#000">QUAN</div>
<div class="a t u" style="left:42px;top:85px;color:#000">DMBTR</div>
<div class="a t u" style="left:125px;top:85px;color:#000">DMBTR</div>
<div class="a t" style="left:210px;top:85px;color:#000;letter-spacing:-0.25px">Amount in loc...</div>
<div class="a t u" style="left:364px;top:85px;color:#000">AMO</div>
<div class="a t u" style="left:433px;top:85px;color:#000">CURR</div>
<div class="a t u" style="left:42px;top:105px;color:#000">MENGE</div>
<div class="a t u" style="left:125px;top:105px;color:#000">MENGE</div>
<div class="a t" style="left:210px;top:105px;color:#000;letter-spacing:-0.25px">Quantity</div>
<div class="a t u" style="left:364px;top:105px;color:#000">QUA</div>
<div class="a t u" style="left:433px;top:105px;color:#000">QUAN</div>
<div class="a t u" style="left:42px;top:125px;color:#000">NOSOO</div>
<div class="a t u" style="left:125px;top:125px;color:#000">NOSOO</div>
<div class="a t" style="left:210px;top:125px;color:#000;letter-spacing:-0.25px">Quantity for St...</div>
<div class="a t u" style="left:364px;top:125px;color:#000">NUM</div>
<div class="a t u" style="left:433px;top:125px;color:#000">DEC</div>
</div>
<div class="a " style="left:656px;top:342px;width:72px;height:23px;background:#f8e396;border:3px solid #d49f3c"></div>
<svg class="a" style="left:383px;top:326px" width="17" height="17" viewBox="0 0 17 17"><path d="M0 0 H4 L0 4Z" fill="#f060d0"/><path d="M1.5 12 L6 2 Q7 1 8 2 L9.5 6" fill="none" stroke="#555" stroke-width="0.9"/><path d="M1.5 12 H6" stroke="#555" stroke-width="0.9"/><rect x="6.5" y="6.5" width="9" height="9" fill="#0c0" stroke="#000" stroke-width="1.2"/><g fill="#d8ffd8"><rect x="8" y="8" width="1" height="1"/><rect x="10.5" y="8" width="1" height="1"/><rect x="13" y="8" width="1" height="1"/><rect x="8" y="10.5" width="1" height="1"/><rect x="10.5" y="10.5" width="1" height="1"/><rect x="13" y="10.5" width="1" height="1"/><rect x="8" y="13" width="1" height="1"/><rect x="10.5" y="13" width="1" height="1"/><rect x="13" y="13" width="1" height="1"/></g></svg>
<svg class="a" style="left:684px;top:326px" width="17" height="17" viewBox="0 0 17 17"><defs></defs><circle cx="8.8" cy="8.8" r="7.8" fill="#5a0008"/><circle cx="8" cy="8" r="7.5" fill="url(#rg)"/><path d="M4.6 4.6 L11.4 11.4 M11.4 4.6 L4.6 11.4" stroke="#fff" stroke-width="2.3"/></svg>
<svg class="a" style="left:383px;top:346px" width="17" height="17" viewBox="0 0 17 17"><path d="M0 0 H4 L0 4Z" fill="#f060d0"/><path d="M1.5 12 L6 2 Q7 1 8 2 L9.5 6" fill="none" stroke="#555" stroke-width="0.9"/><path d="M1.5 12 H6" stroke="#555" stroke-width="0.9"/><rect x="6.5" y="6.5" width="9" height="9" fill="#0c0" stroke="#000" stroke-width="1.2"/><g fill="#d8ffd8"><rect x="8" y="8" width="1" height="1"/><rect x="10.5" y="8" width="1" height="1"/><rect x="13" y="8" width="1" height="1"/><rect x="8" y="10.5" width="1" height="1"/><rect x="10.5" y="10.5" width="1" height="1"/><rect x="13" y="10.5" width="1" height="1"/><rect x="8" y="13" width="1" height="1"/><rect x="10.5" y="13" width="1" height="1"/><rect x="13" y="13" width="1" height="1"/></g></svg>
<svg class="a" style="left:684px;top:346px" width="17" height="17" viewBox="0 0 17 17"><defs></defs><circle cx="8.8" cy="8.8" r="7.8" fill="#5a0008"/><circle cx="8" cy="8" r="7.5" fill="url(#rg)"/><path d="M4.6 4.6 L11.4 11.4 M11.4 4.6 L4.6 11.4" stroke="#fff" stroke-width="2.3"/></svg>
<svg class="a" style="left:383px;top:366px" width="17" height="17" viewBox="0 0 17 17"><path d="M0 0 H4 L0 4Z" fill="#f060d0"/><path d="M1.5 12 L6 2 Q7 1 8 2 L9.5 6" fill="none" stroke="#555" stroke-width="0.9"/><path d="M1.5 12 H6" stroke="#555" stroke-width="0.9"/><rect x="6.5" y="6.5" width="9" height="9" fill="#0c0" stroke="#000" stroke-width="1.2"/><g fill="#d8ffd8"><rect x="8" y="8" width="1" height="1"/><rect x="10.5" y="8" width="1" height="1"/><rect x="13" y="8" width="1" height="1"/><rect x="8" y="10.5" width="1" height="1"/><rect x="10.5" y="10.5" width="1" height="1"/><rect x="13" y="10.5" width="1" height="1"/><rect x="8" y="13" width="1" height="1"/><rect x="10.5" y="13" width="1" height="1"/><rect x="13" y="13" width="1" height="1"/></g></svg>
<svg class="a" style="left:684px;top:366px" width="17" height="17" viewBox="0 0 17 17"><defs></defs><circle cx="8.8" cy="8.8" r="7.8" fill="#5a0008"/><circle cx="8" cy="8" r="7.5" fill="url(#rg)"/><path d="M4.6 4.6 L11.4 11.4 M11.4 4.6 L4.6 11.4" stroke="#fff" stroke-width="2.3"/></svg>
<svg class="a" style="left:383px;top:386px" width="17" height="17" viewBox="0 0 17 17"><path d="M0 0 H4 L0 4Z" fill="#f060d0"/><path d="M1.5 12 L6 2 Q7 1 8 2 L9.5 6" fill="none" stroke="#555" stroke-width="0.9"/><path d="M1.5 12 H6" stroke="#555" stroke-width="0.9"/><rect x="6.5" y="6.5" width="9" height="9" fill="#0c0" stroke="#000" stroke-width="1.2"/><g fill="#d8ffd8"><rect x="8" y="8" width="1" height="1"/><rect x="10.5" y="8" width="1" height="1"/><rect x="13" y="8" width="1" height="1"/><rect x="8" y="10.5" width="1" height="1"/><rect x="10.5" y="10.5" width="1" height="1"/><rect x="13" y="10.5" width="1" height="1"/><rect x="8" y="13" width="1" height="1"/><rect x="10.5" y="13" width="1" height="1"/><rect x="13" y="13" width="1" height="1"/></g></svg>
<svg class="a" style="left:684px;top:386px" width="17" height="17" viewBox="0 0 17 17"><defs></defs><circle cx="8.8" cy="8.8" r="7.8" fill="#5a0008"/><circle cx="8" cy="8" r="7.5" fill="url(#rg)"/><path d="M4.6 4.6 L11.4 11.4 M11.4 4.6 L4.6 11.4" stroke="#fff" stroke-width="2.3"/></svg>
<svg class="a" style="left:383px;top:406px" width="17" height="17" viewBox="0 0 17 17"><path d="M0 0 H4 L0 4Z" fill="#f060d0"/><path d="M1.5 12 L6 2 Q7 1 8 2 L9.5 6" fill="none" stroke="#555" stroke-width="0.9"/><path d="M1.5 12 H6" stroke="#555" stroke-width="0.9"/><rect x="6.5" y="6.5" width="9" height="9" fill="#0c0" stroke="#000" stroke-width="1.2"/><g fill="#d8ffd8"><rect x="8" y="8" width="1" height="1"/><rect x="10.5" y="8" width="1" height="1"/><rect x="13" y="8" width="1" height="1"/><rect x="8" y="10.5" width="1" height="1"/><rect x="10.5" y="10.5" width="1" height="1"/><rect x="13" y="10.5" width="1" height="1"/><rect x="8" y="13" width="1" height="1"/><rect x="10.5" y="13" width="1" height="1"/><rect x="13" y="13" width="1" height="1"/></g></svg>
<svg class="a" style="left:684px;top:406px" width="17" height="17" viewBox="0 0 17 17"><defs></defs><circle cx="8.8" cy="8.8" r="7.8" fill="#5a0008"/><circle cx="8" cy="8" r="7.5" fill="url(#rg)"/><path d="M4.6 4.6 L11.4 11.4 M11.4 4.6 L4.6 11.4" stroke="#fff" stroke-width="2.3"/></svg>
<svg class="a" style="left:383px;top:426px" width="17" height="17" viewBox="0 0 17 17"><path d="M0 0 H4 L0 4Z" fill="#f060d0"/><path d="M1.5 12 L6 2 Q7 1 8 2 L9.5 6" fill="none" stroke="#555" stroke-width="0.9"/><path d="M1.5 12 H6" stroke="#555" stroke-width="0.9"/><rect x="6.5" y="6.5" width="9" height="9" fill="#0c0" stroke="#000" stroke-width="1.2"/><g fill="#d8ffd8"><rect x="8" y="8" width="1" height="1"/><rect x="10.5" y="8" width="1" height="1"/><rect x="13" y="8" width="1" height="1"/><rect x="8" y="10.5" width="1" height="1"/><rect x="10.5" y="10.5" width="1" height="1"/><rect x="13" y="10.5" width="1" height="1"/><rect x="8" y="13" width="1" height="1"/><rect x="10.5" y="13" width="1" height="1"/><rect x="13" y="13" width="1" height="1"/></g></svg>
<svg class="a" style="left:684px;top:426px" width="17" height="17" viewBox="0 0 17 17"><defs></defs><circle cx="8.8" cy="8.8" r="7.8" fill="#5a0008"/><circle cx="8" cy="8" r="7.5" fill="url(#rg)"/><path d="M4.6 4.6 L11.4 11.4 M11.4 4.6 L4.6 11.4" stroke="#fff" stroke-width="2.3"/></svg>
<div class="a" style="left:366px;top:443px;width:634px;height:8px;overflow:hidden">
<svg class="a" style="left:17px;top:2px" width="17" height="17" viewBox="0 0 17 17"><path d="M0 0 H4 L0 4Z" fill="#f060d0"/><path d="M1.5 12 L6 2 Q7 1 8 2 L9.5 6" fill="none" stroke="#555" stroke-width="0.9"/></svg>
<svg class="a" style="left:318px;top:3px" width="17" height="17"><circle cx="8" cy="8" r="7.5" fill="#e0101a"/></svg>
</div>
<svg class="a" style="left:371px;top:350px" width="5" height="9"><path d="M0 0 L4.5 4.5 L0 9Z" fill="#54617a"/></svg>
<svg class="a" style="left:1004px;top:330px" width="9" height="5"><path d="M0 5 L4.5 0 L9 5Z" fill="#54617a"/></svg>
<div class="a " style="left:1002px;top:343px;width:14px;height:82px;background:linear-gradient(90deg,#e6eef8,#d3dff0);border:1px solid #9db3d0;border-radius:2px"></div>
<svg class="a" style="left:1005px;top:379px" width="8" height="7"><path d="M0 0.5H8M0 2.5H8M0 4.5H8M0 6.5H8" stroke="#4f5b73" stroke-width="1"/></svg>
<svg class="a" style="left:1004px;top:440px" width="9" height="5"><path d="M0 0 H9 L4.5 5Z" fill="#54617a"/></svg>
<div class="a " style="left:861px;top:276px;width:140px;height:169px;border:3px solid #d49f3c"></div>
<div class="a " style="left:356px;top:454px;width:354px;height:33px;border:3px solid #d49f3c"></div>
<svg class="a" style="left:368px;top:461px" width="17" height="17" viewBox="0 0 17 17"><defs></defs><circle cx="8.8" cy="8.8" r="7.8" fill="#5a0008"/><circle cx="8" cy="8" r="7.5" fill="url(#rg)"/><path d="M4.6 4.6 L11.4 11.4 M11.4 4.6 L4.6 11.4" stroke="#fff" stroke-width="2.3"/></svg>
<div class="a t " style="left:386px;top:457px;color:#8b0d1e;letter-spacing:-0.06px">Either Currency InfoObject or Fixed Currency must be specified.</div>
<div class="a t " style="left:386px;top:470px;color:#8b0d1e;letter-spacing:-0.06px">Invalid namespace for TechnicalName.</div>
<div class="a " style="left:353px;top:509px;width:677px;height:231px;border:1px solid #a5b9d5;border-radius:3px"></div>
<div class="a " style="left:361px;top:507px;width:81px;height:4px;background:#fff"></div>
<div class="a t " style="left:365px;top:504px;color:#1b1b1b">Characteristics</div>
<div class="a " style="left:365px;top:524px;width:653px;height:185px;background:#fff;border:1px solid #8ea9cb"></div>
<div class="a " style="left:366px;top:525px;width:651px;height:19px;background:linear-gradient(#eef4fb,#dfe9f6)"></div>
<div class="a " style="left:366px;top:544px;width:651px;height:1px;background:#8ea9cb"></div>
<div class="a " style="left:381px;top:525px;width:1px;height:19px;background:#8ea9cb"></div>
<div class="a " style="left:394px;top:525px;width:1px;height:19px;background:#8ea9cb"></div>
<div class="a " style="left:439px;top:525px;width:1px;height:19px;background:#8ea9cb"></div>
<div class="a " style="left:483px;top:525px;width:1px;height:19px;background:#8ea9cb"></div>
<div class="a " style="left:527px;top:525px;width:1px;height:19px;background:#8ea9cb"></div>
<div class="a " style="left:564px;top:525px;width:1px;height:19px;background:#8ea9cb"></div>
<div class="a " style="left:600px;top:525px;width:1px;height:19px;background:#8ea9cb"></div>
<div class="a " style="left:636px;top:525px;width:1px;height:19px;background:#8ea9cb"></div>
<div class="a " style="left:673px;top:525px;width:1px;height:19px;background:#8ea9cb"></div>
<div class="a " style="left:709px;top:525px;width:1px;height:19px;background:#8ea9cb"></div>
<div class="a " style="left:746px;top:525px;width:1px;height:19px;background:#8ea9cb"></div>
<div class="a " style="left:781px;top:525px;width:1px;height:19px;background:#8ea9cb"></div>
<div class="a " style="left:818px;top:525px;width:1px;height:19px;background:#8ea9cb"></div>
<div class="a " style="left:854px;top:525px;width:1px;height:19px;background:#8ea9cb"></div>
<div class="a " style="left:890px;top:525px;width:1px;height:19px;background:#8ea9cb"></div>
<div class="a " style="left:927px;top:525px;width:1px;height:19px;background:#8ea9cb"></div>
<div class="a " style="left:963px;top:525px;width:1px;height:19px;background:#8ea9cb"></div>
<div class="a " style="left:1000px;top:525px;width:1px;height:19px;background:#8ea9cb"></div>
<div class="a " style="left:366px;top:545px;width:16px;height:163px;background:#e6edf7"></div>
<div class="a " style="left:381px;top:545px;width:1px;height:163px;background:#8ea9cb"></div>
<div class="a " style="left:366px;top:570px;width:15px;height:1px;background:#8ea9cb"></div>
<div class="a " style="left:394px;top:545px;width:1px;height:23px;background:#dcdcdc"></div>
<div class="a " style="left:439px;top:545px;width:1px;height:23px;background:#dcdcdc"></div>
<div class="a " style="left:483px;top:545px;width:1px;height:23px;background:#dcdcdc"></div>
<div class="a " style="left:527px;top:545px;width:1px;height:23px;background:#dcdcdc"></div>
<div class="a " style="left:564px;top:545px;width:1px;height:23px;background:#dcdcdc"></div>
<div class="a " style="left:600px;top:545px;width:1px;height:23px;background:#dcdcdc"></div>
<div class="a " style="left:636px;top:545px;width:1px;height:23px;background:#dcdcdc"></div>
<div class="a " style="left:673px;top:545px;width:1px;height:23px;background:#dcdcdc"></div>
<div class="a " style="left:709px;top:545px;width:1px;height:23px;background:#dcdcdc"></div>
<div class="a " style="left:746px;top:545px;width:1px;height:23px;background:#dcdcdc"></div>
<div class="a " style="left:781px;top:545px;width:1px;height:23px;background:#dcdcdc"></div>
<div class="a " style="left:818px;top:545px;width:1px;height:23px;background:#dcdcdc"></div>
<div class="a " style="left:854px;top:545px;width:1px;height:23px;background:#dcdcdc"></div>
<div class="a " style="left:890px;top:545px;width:1px;height:23px;background:#dcdcdc"></div>
<div class="a " style="left:927px;top:545px;width:1px;height:23px;background:#dcdcdc"></div>
<div class="a " style="left:963px;top:545px;width:1px;height:23px;background:#dcdcdc"></div>
<div class="a " style="left:1000px;top:545px;width:1px;height:23px;background:#dcdcdc"></div>
<div class="a " style="left:382px;top:567px;width:618px;height:1px;background:#4a4a4a"></div>
<div class="a " style="left:382px;top:569px;width:618px;height:1px;background:#4a4a4a"></div>
<svg class="a" style="left:370px;top:555px" width="8" height="8" viewBox="0 0 8 8"><path d="M0 0 H7 V1.2 L4.3 3.2 V7 H2.7 V3.2 L0 1.2Z" fill="#4f5f7a"/></svg>
<div class="a " style="left:382px;top:591px;width:618px;height:1px;background:#d5dfec"></div>
<div class="a " style="left:366px;top:591px;width:15px;height:1px;background:#8ea9cb"></div>
<div class="a " style="left:382px;top:612px;width:618px;height:1px;background:#d5dfec"></div>
<div class="a " style="left:366px;top:612px;width:15px;height:1px;background:#8ea9cb"></div>
<div class="a " style="left:382px;top:633px;width:618px;height:1px;background:#d5dfec"></div>
<div class="a " style="left:366px;top:633px;width:15px;height:1px;background:#8ea9cb"></div>
<div class="a " style="left:382px;top:654px;width:618px;height:1px;background:#d5dfec"></div>
<div class="a " style="left:366px;top:654px;width:15px;height:1px;background:#8ea9cb"></div>
<div class="a " style="left:382px;top:675px;width:618px;height:1px;background:#d5dfec"></div>
<div class="a " style="left:366px;top:675px;width:15px;height:1px;background:#8ea9cb"></div>
<div class="a " style="left:382px;top:696px;width:618px;height:1px;background:#d5dfec"></div>
<div class="a " style="left:366px;top:696px;width:15px;height:1px;background:#8ea9cb"></div>
<div class="a " style="left:394px;top:570px;width:1px;height:138px;background:#d5dfec"></div>
<div class="a " style="left:439px;top:570px;width:1px;height:138px;background:#d5dfec"></div>
<div class="a " style="left:483px;top:570px;width:1px;height:138px;background:#d5dfec"></div>
<div class="a " style="left:527px;top:570px;width:1px;height:138px;background:#d5dfec"></div>
<div class="a " style="left:564px;top:570px;width:1px;height:138px;background:#d5dfec"></div>
<div class="a " style="left:600px;top:570px;width:1px;height:138px;background:#d5dfec"></div>
<div class="a " style="left:636px;top:570px;width:1px;height:138px;background:#d5dfec"></div>
<div class="a " style="left:673px;top:570px;width:1px;height:138px;background:#d5dfec"></div>
<div class="a " style="left:709px;top:570px;width:1px;height:138px;background:#d5dfec"></div>
<div class="a " style="left:746px;top:570px;width:1px;height:138px;background:#d5dfec"></div>
<div class="a " style="left:781px;top:570px;width:1px;height:138px;background:#d5dfec"></div>
<div class="a " style="left:818px;top:570px;width:1px;height:138px;background:#d5dfec"></div>
<div class="a " style="left:854px;top:570px;width:1px;height:138px;background:#d5dfec"></div>
<div class="a " style="left:890px;top:570px;width:1px;height:138px;background:#d5dfec"></div>
<div class="a " style="left:927px;top:570px;width:1px;height:138px;background:#d5dfec"></div>
<div class="a " style="left:963px;top:570px;width:1px;height:138px;background:#d5dfec"></div>
<div class="a " style="left:1000px;top:570px;width:1px;height:138px;background:#d5dfec"></div>
<div class="a " style="left:1000px;top:570px;width:17px;height:138px;background:#dfe9f7"></div>
<div class="a t " style="left:384px;top:529px;letter-spacing:-0.15px">.</div>
<div class="a t " style="left:398px;top:529px;letter-spacing:-0.15px">Tech...</div>
<div class="a t " style="left:443px;top:529px;letter-spacing:-0.15px">Field...</div>
<div class="a t " style="left:487px;top:529px;letter-spacing:-0.15px">Desc...</div>
<div class="a t " style="left:531px;top:529px;letter-spacing:-0.15px">Valid</div>
<div class="a t " style="left:568px;top:529px;letter-spacing:-0.15px">Dat...</div>
<div class="a t " style="left:604px;top:529px;letter-spacing:-0.15px">Len...</div>
<div class="a t " style="left:640px;top:529px;letter-spacing:-0.15px">Out...</div>
<div class="a t " style="left:677px;top:529px;letter-spacing:-0.15px">Aut...</div>
<div class="a t " style="left:713px;top:529px;letter-spacing:-0.15px">Lo...</div>
<div class="a t " style="left:750px;top:529px;letter-spacing:-0.15px">Is...</div>
<div class="a t " style="left:785px;top:529px;letter-spacing:-0.15px">Sho...</div>
<div class="a t " style="left:822px;top:529px;letter-spacing:-0.15px">Me...</div>
<div class="a t " style="left:858px;top:529px;letter-spacing:-0.15px">Lon...</div>
<div class="a t " style="left:894px;top:529px;letter-spacing:-0.15px">Lan...</div>
<div class="a t " style="left:931px;top:529px;letter-spacing:-0.15px">Tim...</div>
<div class="a t " style="left:967px;top:529px;letter-spacing:-0.15px">Co...</div>
<div class="a" style="left:366px;top:570px;width:634px;height:138px;overflow:hidden">
<div class="a t u" style="left:33px;top:5px;color:#000">AKTNR</div>
<div class="a t u" style="left:77px;top:5px;color:#000">AKTNR</div>
<div class="a t" style="left:121px;top:5px;color:#000;letter-spacing:-0.25px">Prom...</div>
<div class="a t u" style="left:202px;top:5px;color:#000">CH...</div>
<div class="a t" style="left:234px;width:32px;text-align:right;top:5px;color:#000">10</div>
<div class="a t" style="left:270px;width:33px;text-align:right;top:5px;color:#000">10</div>
<svg class="a" style="left:16px;top:3px" width="14" height="16" viewBox="0 0 14 16"><path d="M0 0 H4 L0 4Z" fill="#f060d0"/><g fill="#fff" stroke="#666" stroke-width="1"><rect x="5.5" y="1.5" width="6" height="7"/><path d="M5.5 4.5H11.5M8.5 1.5V8.5"/></g><path d="M1.5 14.5 L6.5 5 L11.5 14.5Z" fill="#12d812" stroke="#000" stroke-width="1.3"/><path d="M6.5 6 V14" stroke="#0a8a0a" stroke-width="0.8"/></svg>
<svg class="a" style="left:171px;top:3px" width="17" height="17" viewBox="0 0 17 17"><circle cx="8.8" cy="8.8" r="7.8" fill="#5a0008"/><circle cx="8" cy="8" r="7.5" fill="url(#rg)"/><path d="M4.6 4.6 L11.4 11.4 M11.4 4.6 L4.6 11.4" stroke="#fff" stroke-width="2.3"/></svg>
<div class="a" style="left:319px;top:4px;width:14px;height:14px;border:1px solid #8fa9cc;background:#fff;box-shadow:inset 0 0 0 1px #e8eef7,inset 0 0 0 2px #c8c8c8"></div>
<div class="a" style="left:355px;top:4px;width:14px;height:14px;border:1px solid #8fa9cc;background:#fff;box-shadow:inset 0 0 0 1px #e8eef7,inset 0 0 0 2px #c8c8c8"></div>
<div class="a" style="left:391px;top:4px;width:14px;height:14px;border:1px solid #8fa9cc;background:#fff;box-shadow:inset 0 0 0 1px #e8eef7,inset 0 0 0 2px #c8c8c8"></div>
<div class="a" style="left:427px;top:4px;width:14px;height:14px;border:1px solid #8fa9cc;background:#fff;box-shadow:inset 0 0 0 1px #e8eef7,inset 0 0 0 2px #c8c8c8"></div>
<div class="a" style="left:464px;top:4px;width:14px;height:14px;border:1px solid #8fa9cc;background:#fff;box-shadow:inset 0 0 0 1px #e8eef7,inset 0 0 0 2px #c8c8c8"></div>
<div class="a" style="left:500px;top:4px;width:14px;height:14px;border:1px solid #8fa9cc;background:#fff;box-shadow:inset 0 0 0 1px #e8eef7,inset 0 0 0 2px #c8c8c8"></div>
<div class="a" style="left:536px;top:4px;width:14px;height:14px;border:1px solid #8fa9cc;background:#fff;box-shadow:inset 0 0 0 1px #e8eef7,inset 0 0 0 2px #c8c8c8"></div>
<div class="a" style="left:573px;top:4px;width:14px;height:14px;border:1px solid #8fa9cc;background:#fff;box-shadow:inset 0 0 0 1px #e8eef7,inset 0 0 0 2px #c8c8c8"></div>
<div class="a t u" style="left:33px;top:26px;color:#000">BELNR</div>
<div class="a t u" style="left:77px;top:26px;color:#000">BELNR</div>
<div class="a t" style="left:121px;top:26px;color:#000;letter-spacing:-0.25px">Acco...</div>
<div class="a t u" style="left:202px;top:26px;color:#000">CH...</div>
<div class="a t" style="left:234px;width:32px;text-align:right;top:26px;color:#000">10</div>
<div class="a t" style="left:270px;width:33px;text-align:right;top:26px;color:#000">10</div>
<svg class="a" style="left:16px;top:24px" width="14" height="16" viewBox="0 0 14 16"><path d="M0 0 H4 L0 4Z" fill="#f060d0"/><g fill="#fff" stroke="#666" stroke-width="1"><rect x="5.5" y="1.5" width="6" height="7"/><path d="M5.5 4.5H11.5M8.5 1.5V8.5"/></g><path d="M1.5 14.5 L6.5 5 L11.5 14.5Z" fill="#12d812" stroke="#000" stroke-width="1.3"/><path d="M6.5 6 V14" stroke="#0a8a0a" stroke-width="0.8"/></svg>
<svg class="a" style="left:171px;top:24px" width="17" height="17" viewBox="0 0 17 17"><circle cx="8.8" cy="8.8" r="7.8" fill="#5a0008"/><circle cx="8" cy="8" r="7.5" fill="url(#rg)"/><path d="M4.6 4.6 L11.4 11.4 M11.4 4.6 L4.6 11.4" stroke="#fff" stroke-width="2.3"/></svg>
<div class="a" style="left:319px;top:25px;width:14px;height:14px;border:1px solid #8fa9cc;background:#fff;box-shadow:inset 0 0 0 1px #e8eef7,inset 0 0 0 2px #c8c8c8"></div>
<div class="a" style="left:355px;top:25px;width:14px;height:14px;border:1px solid #8fa9cc;background:#fff;box-shadow:inset 0 0 0 1px #e8eef7,inset 0 0 0 2px #c8c8c8"></div>
<div class="a" style="left:391px;top:25px;width:14px;height:14px;border:1px solid #8fa9cc;background:#fff;box-shadow:inset 0 0 0 1px #e8eef7,inset 0 0 0 2px #c8c8c8"></div>
<div class="a" style="left:427px;top:25px;width:14px;height:14px;border:1px solid #8fa9cc;background:#fff;box-shadow:inset 0 0 0 1px #e8eef7,inset 0 0 0 2px #c8c8c8"></div>
<div class="a" style="left:464px;top:25px;width:14px;height:14px;border:1px solid #8fa9cc;background:#fff;box-shadow:inset 0 0 0 1px #e8eef7,inset 0 0 0 2px #c8c8c8"></div>
<div class="a" style="left:500px;top:25px;width:14px;height:14px;border:1px solid #8fa9cc;background:#fff;box-shadow:inset 0 0 0 1px #e8eef7,inset 0 0 0 2px #c8c8c8"></div>
<div class="a" style="left:536px;top:25px;width:14px;height:14px;border:1px solid #8fa9cc;background:#fff;box-shadow:inset 0 0 0 1px #e8eef7,inset 0 0 0 2px #c8c8c8"></div>
<div class="a" style="left:573px;top:25px;width:14px;height:14px;border:1px solid #8fa9cc;background:#fff;box-shadow:inset 0 0 0 1px #e8eef7,inset 0 0 0 2px #c8c8c8"></div>
<div class="a t u" style="left:33px;top:47px;color:#000">BKLAS</div>
<div class="a t u" style="left:77px;top:47px;color:#000">BKLAS</div>
<div class="a t" style="left:121px;top:47px;color:#000;letter-spacing:-0.25px">Valua...</div>
<div class="a t u" style="left:202px;top:47px;color:#000">CH...</div>
<div class="a t" style="left:234px;width:32px;text-align:right;top:47px;color:#000">4</div>
<div class="a t" style="left:270px;width:33px;text-align:right;top:47px;color:#000">4</div>
<svg class="a" style="left:16px;top:45px" width="14" height="16" viewBox="0 0 14 16"><path d="M0 0 H4 L0 4Z" fill="#f060d0"/><g fill="#fff" stroke="#666" stroke-width="1"><rect x="5.5" y="1.5" width="6" height="7"/><path d="M5.5 4.5H11.5M8.5 1.5V8.5"/></g><path d="M1.5 14.5 L6.5 5 L11.5 14.5Z" fill="#12d812" stroke="#000" stroke-width="1.3"/><path d="M6.5 6 V14" stroke="#0a8a0a" stroke-width="0.8"/></svg>
<svg class="a" style="left:171px;top:45px" width="17" height="17" viewBox="0 0 17 17"><circle cx="8.8" cy="8.8" r="7.8" fill="#5a0008"/><circle cx="8" cy="8" r="7.5" fill="url(#rg)"/><path d="M4.6 4.6 L11.4 11.4 M11.4 4.6 L4.6 11.4" stroke="#fff" stroke-width="2.3"/></svg>
<div class="a" style="left:319px;top:46px;width:14px;height:14px;border:1px solid #8fa9cc;background:#fff;box-shadow:inset 0 0 0 1px #e8eef7,inset 0 0 0 2px #c8c8c8"></div>
<div class="a" style="left:355px;top:46px;width:14px;height:14px;border:1px solid #8fa9cc;background:#fff;box-shadow:inset 0 0 0 1px #e8eef7,inset 0 0 0 2px #c8c8c8"></div>
<div class="a" style="left:391px;top:46px;width:14px;height:14px;border:1px solid #8fa9cc;background:#fff;box-shadow:inset 0 0 0 1px #e8eef7,inset 0 0 0 2px #c8c8c8"></div>
<div class="a" style="left:427px;top:46px;width:14px;height:14px;border:1px solid #8fa9cc;background:#fff;box-shadow:inset 0 0 0 1px #e8eef7,inset 0 0 0 2px #c8c8c8"></div>
<div class="a" style="left:464px;top:46px;width:14px;height:14px;border:1px solid #8fa9cc;background:#fff;box-shadow:inset 0 0 0 1px #e8eef7,inset 0 0 0 2px #c8c8c8"></div>
<div class="a" style="left:500px;top:46px;width:14px;height:14px;border:1px solid #8fa9cc;background:#fff;box-shadow:inset 0 0 0 1px #e8eef7,inset 0 0 0 2px #c8c8c8"></div>
<div class="a" style="left:536px;top:46px;width:14px;height:14px;border:1px solid #8fa9cc;background:#fff;box-shadow:inset 0 0 0 1px #e8eef7,inset 0 0 0 2px #c8c8c8"></div>
<div class="a" style="left:573px;top:46px;width:14px;height:14px;border:1px solid #8fa9cc;background:#fff;box-shadow:inset 0 0 0 1px #e8eef7,inset 0 0 0 2px #c8c8c8"></div>
<div class="a t u" style="left:33px;top:68px;color:#000">BSTA...</div>
<div class="a t u" style="left:77px;top:68px;color:#000">BSTA...</div>
<div class="a t" style="left:121px;top:68px;color:#000;letter-spacing:-0.25px">Stock...</div>
<div class="a t u" style="left:202px;top:68px;color:#000">CH...</div>
<div class="a t" style="left:234px;width:32px;text-align:right;top:68px;color:#000">1</div>
<div class="a t" style="left:270px;width:33px;text-align:right;top:68px;color:#000">1</div>
<svg class="a" style="left:16px;top:66px" width="14" height="16" viewBox="0 0 14 16"><path d="M0 0 H4 L0 4Z" fill="#f060d0"/><g fill="#fff" stroke="#666" stroke-width="1"><rect x="5.5" y="1.5" width="6" height="7"/><path d="M5.5 4.5H11.5M8.5 1.5V8.5"/></g><path d="M1.5 14.5 L6.5 5 L11.5 14.5Z" fill="#12d812" stroke="#000" stroke-width="1.3"/><path d="M6.5 6 V14" stroke="#0a8a0a" stroke-width="0.8"/></svg>
<svg class="a" style="left:171px;top:66px" width="17" height="17" viewBox="0 0 17 17"><circle cx="8.8" cy="8.8" r="7.8" fill="#5a0008"/><circle cx="8" cy="8" r="7.5" fill="url(#rg)"/><path d="M4.6 4.6 L11.4 11.4 M11.4 4.6 L4.6 11.4" stroke="#fff" stroke-width="2.3"/></svg>
<div class="a" style="left:319px;top:67px;width:14px;height:14px;border:1px solid #8fa9cc;background:#fff;box-shadow:inset 0 0 0 1px #e8eef7,inset 0 0 0 2px #c8c8c8"></div>
<div class="a" style="left:355px;top:67px;width:14px;height:14px;border:1px solid #8fa9cc;background:#fff;box-shadow:inset 0 0 0 1px #e8eef7,inset 0 0 0 2px #c8c8c8"></div>
<div class="a" style="left:391px;top:67px;width:14px;height:14px;border:1px solid #8fa9cc;background:#fff;box-shadow:inset 0 0 0 1px #e8eef7,inset 0 0 0 2px #c8c8c8"></div>
<div class="a" style="left:427px;top:67px;width:14px;height:14px;border:1px solid #8fa9cc;background:#fff;box-shadow:inset 0 0 0 1px #e8eef7,inset 0 0 0 2px #c8c8c8"></div>
<div class="a" style="left:464px;top:67px;width:14px;height:14px;border:1px solid #8fa9cc;background:#fff;box-shadow:inset 0 0 0 1px #e8eef7,inset 0 0 0 2px #c8c8c8"></div>
<div class="a" style="left:500px;top:67px;width:14px;height:14px;border:1px solid #8fa9cc;background:#fff;box-shadow:inset 0 0 0 1px #e8eef7,inset 0 0 0 2px #c8c8c8"></div>
<div class="a" style="left:536px;top:67px;width:14px;height:14px;border:1px solid #8fa9cc;background:#fff;box-shadow:inset 0 0 0 1px #e8eef7,inset 0 0 0 2px #c8c8c8"></div>
<div class="a" style="left:573px;top:67px;width:14px;height:14px;border:1px solid #8fa9cc;background:#fff;box-shadow:inset 0 0 0 1px #e8eef7,inset 0 0 0 2px #c8c8c8"></div>
<div class="a t u" style="left:33px;top:89px;color:#000">BSTTYP</div>
<div class="a t u" style="left:77px;top:89px;color:#000">BSTT...</div>
<div class="a t" style="left:121px;top:89px;color:#000;letter-spacing:-0.25px">Stock...</div>
<div class="a t u" style="left:202px;top:89px;color:#000">CH...</div>
<div class="a t" style="left:234px;width:32px;text-align:right;top:89px;color:#000">1</div>
<div class="a t" style="left:270px;width:33px;text-align:right;top:89px;color:#000">1</div>
<svg class="a" style="left:16px;top:87px" width="14" height="16" viewBox="0 0 14 16"><path d="M0 0 H4 L0 4Z" fill="#f060d0"/><g fill="#fff" stroke="#666" stroke-width="1"><rect x="5.5" y="1.5" width="6" height="7"/><path d="M5.5 4.5H11.5M8.5 1.5V8.5"/></g><path d="M1.5 14.5 L6.5 5 L11.5 14.5Z" fill="#12d812" stroke="#000" stroke-width="1.3"/><path d="M6.5 6 V14" stroke="#0a8a0a" stroke-width="0.8"/></svg>
<svg class="a" style="left:171px;top:87px" width="17" height="17" viewBox="0 0 17 17"><circle cx="8.8" cy="8.8" r="7.8" fill="#5a0008"/><circle cx="8" cy="8" r="7.5" fill="url(#rg)"/><path d="M4.6 4.6 L11.4 11.4 M11.4 4.6 L4.6 11.4" stroke="#fff" stroke-width="2.3"/></svg>
<div class="a" style="left:319px;top:88px;width:14px;height:14px;border:1px solid #8fa9cc;background:#fff;box-shadow:inset 0 0 0 1px #e8eef7,inset 0 0 0 2px #c8c8c8"></div>
<div class="a" style="left:355px;top:88px;width:14px;height:14px;border:1px solid #8fa9cc;background:#fff;box-shadow:inset 0 0 0 1px #e8eef7,inset 0 0 0 2px #c8c8c8"></div>
<div class="a" style="left:391px;top:88px;width:14px;height:14px;border:1px solid #8fa9cc;background:#fff;box-shadow:inset 0 0 0 1px #e8eef7,inset 0 0 0 2px #c8c8c8"></div>
<div class="a" style="left:427px;top:88px;width:14px;height:14px;border:1px solid #8fa9cc;background:#fff;box-shadow:inset 0 0 0 1px #e8eef7,inset 0 0 0 2px #c8c8c8"></div>
<div class="a" style="left:464px;top:88px;width:14px;height:14px;border:1px solid #8fa9cc;background:#fff;box-shadow:inset 0 0 0 1px #e8eef7,inset 0 0 0 2px #c8c8c8"></div>
<div class="a" style="left:500px;top:88px;width:14px;height:14px;border:1px solid #8fa9cc;background:#fff;box-shadow:inset 0 0 0 1px #e8eef7,inset 0 0 0 2px #c8c8c8"></div>
<div class="a" style="left:536px;top:88px;width:14px;height:14px;border:1px solid #8fa9cc;background:#fff;box-shadow:inset 0 0 0 1px #e8eef7,inset 0 0 0 2px #c8c8c8"></div>
<div class="a" style="left:573px;top:88px;width:14px;height:14px;border:1px solid #8fa9cc;background:#fff;box-shadow:inset 0 0 0 1px #e8eef7,inset 0 0 0 2px #c8c8c8"></div>
<div class="a t u" style="left:33px;top:110px;color:#000">BUKRS</div>
<div class="a t u" style="left:77px;top:110px;color:#000">BUKRS</div>
<div class="a t" style="left:121px;top:110px;color:#000;letter-spacing:-0.25px">Com...</div>
<div class="a t u" style="left:202px;top:110px;color:#000">CH...</div>
<div class="a t" style="left:234px;width:32px;text-align:right;top:110px;color:#000">4</div>
<div class="a t" style="left:270px;width:33px;text-align:right;top:110px;color:#000">4</div>
<svg class="a" style="left:16px;top:108px" width="14" height="16" viewBox="0 0 14 16"><path d="M0 0 H4 L0 4Z" fill="#f060d0"/><g fill="#fff" stroke="#666" stroke-width="1"><rect x="5.5" y="1.5" width="6" height="7"/><path d="M5.5 4.5H11.5M8.5 1.5V8.5"/></g><path d="M1.5 14.5 L6.5 5 L11.5 14.5Z" fill="#12d812" stroke="#000" stroke-width="1.3"/><path d="M6.5 6 V14" stroke="#0a8a0a" stroke-width="0.8"/></svg>
<svg class="a" style="left:171px;top:108px" width="17" height="17" viewBox="0 0 17 17"><circle cx="8.8" cy="8.8" r="7.8" fill="#5a0008"/><circle cx="8" cy="8" r="7.5" fill="url(#rg)"/><path d="M4.6 4.6 L11.4 11.4 M11.4 4.6 L4.6 11.4" stroke="#fff" stroke-width="2.3"/></svg>
<div class="a" style="left:319px;top:109px;width:14px;height:14px;border:1px solid #8fa9cc;background:#fff;box-shadow:inset 0 0 0 1px #e8eef7,inset 0 0 0 2px #c8c8c8"></div>
<div class="a" style="left:355px;top:109px;width:14px;height:14px;border:1px solid #8fa9cc;background:#fff;box-shadow:inset 0 0 0 1px #e8eef7,inset 0 0 0 2px #c8c8c8"></div>
<div class="a" style="left:391px;top:109px;width:14px;height:14px;border:1px solid #8fa9cc;background:#fff;box-shadow:inset 0 0 0 1px #e8eef7,inset 0 0 0 2px #c8c8c8"></div>
<div class="a" style="left:427px;top:109px;width:14px;height:14px;border:1px solid #8fa9cc;background:#fff;box-shadow:inset 0 0 0 1px #e8eef7,inset 0 0 0 2px #c8c8c8"></div>
<div class="a" style="left:464px;top:109px;width:14px;height:14px;border:1px solid #8fa9cc;background:#fff;box-shadow:inset 0 0 0 1px #e8eef7,inset 0 0 0 2px #c8c8c8"></div>
<div class="a" style="left:500px;top:109px;width:14px;height:14px;border:1px solid #8fa9cc;background:#fff;box-shadow:inset 0 0 0 1px #e8eef7,inset 0 0 0 2px #c8c8c8"></div>
<div class="a" style="left:536px;top:109px;width:14px;height:14px;border:1px solid #8fa9cc;background:#fff;box-shadow:inset 0 0 0 1px #e8eef7,inset 0 0 0 2px #c8c8c8"></div>
<div class="a" style="left:573px;top:109px;width:14px;height:14px;border:1px solid #8fa9cc;background:#fff;box-shadow:inset 0 0 0 1px #e8eef7,inset 0 0 0 2px #c8c8c8"></div>
<div class="a t u" style="left:33px;top:131px;color:#000">BWA...</div>
<div class="a t u" style="left:77px;top:131px;color:#000">BWA...</div>
<div class="a t" style="left:121px;top:131px;color:#000;letter-spacing:-0.25px">Appli...</div>
<div class="a t u" style="left:202px;top:131px;color:#000">CH...</div>
<div class="a t" style="left:234px;width:32px;text-align:right;top:131px;color:#000">30</div>
<div class="a t" style="left:270px;width:33px;text-align:right;top:131px;color:#000">30</div>
<svg class="a" style="left:16px;top:129px" width="14" height="16" viewBox="0 0 14 16"><path d="M0 0 H4 L0 4Z" fill="#f060d0"/><g fill="#fff" stroke="#666" stroke-width="1"><rect x="5.5" y="1.5" width="6" height="7"/><path d="M5.5 4.5H11.5M8.5 1.5V8.5"/></g><path d="M1.5 14.5 L6.5 5 L11.5 14.5Z" fill="#12d812" stroke="#000" stroke-width="1.3"/><path d="M6.5 6 V14" stroke="#0a8a0a" stroke-width="0.8"/></svg>
<svg class="a" style="left:171px;top:129px" width="17" height="17" viewBox="0 0 17 17"><circle cx="8.8" cy="8.8" r="7.8" fill="#5a0008"/><circle cx="8" cy="8" r="7.5" fill="url(#rg)"/><path d="M4.6 4.6 L11.4 11.4 M11.4 4.6 L4.6 11.4" stroke="#fff" stroke-width="2.3"/></svg>
<div class="a" style="left:319px;top:130px;width:14px;height:14px;border:1px solid #8fa9cc;background:#fff;box-shadow:inset 0 0 0 1px #e8eef7,inset 0 0 0 2px #c8c8c8"></div>
<div class="a" style="left:355px;top:130px;width:14px;height:14px;border:1px solid #8fa9cc;background:#fff;box-shadow:inset 0 0 0 1px #e8eef7,inset 0 0 0 2px #c8c8c8"></div>
<div class="a" style="left:391px;top:130px;width:14px;height:14px;border:1px solid #8fa9cc;background:#fff;box-shadow:inset 0 0 0 1px #e8eef7,inset 0 0 0 2px #c8c8c8"></div>
<div class="a" style="left:427px;top:130px;width:14px;height:14px;border:1px solid #8fa9cc;background:#fff;box-shadow:inset 0 0 0 1px #e8eef7,inset 0 0 0 2px #c8c8c8"></div>
<div class="a" style="left:464px;top:130px;width:14px;height:14px;border:1px solid #8fa9cc;background:#fff;box-shadow:inset 0 0 0 1px #e8eef7,inset 0 0 0 2px #c8c8c8"></div>
<div class="a" style="left:500px;top:130px;width:14px;height:14px;border:1px solid #8fa9cc;background:#fff;box-shadow:inset 0 0 0 1px #e8eef7,inset 0 0 0 2px #c8c8c8"></div>
<div class="a" style="left:536px;top:130px;width:14px;height:14px;border:1px solid #8fa9cc;background:#fff;box-shadow:inset 0 0 0 1px #e8eef7,inset 0 0 0 2px #c8c8c8"></div>
<div class="a" style="left:573px;top:130px;width:14px;height:14px;border:1px solid #8fa9cc;background:#fff;box-shadow:inset 0 0 0 1px #e8eef7,inset 0 0 0 2px #c8c8c8"></div>
</div>
<svg class="a" style="left:1004px;top:577px" width="9" height="5"><path d="M0 5 L4.5 0 L9 5Z" fill="#54617a"/></svg>
<div class="a " style="left:1002px;top:588px;width:14px;height:28px;background:linear-gradient(90deg,#e6eef8,#d3dff0);border:1px solid #9db3d0;border-radius:2px"></div>
<svg class="a" style="left:1005px;top:599px" width="8" height="7"><path d="M0 0.5H8M0 2.5H8M0 4.5H8M0 6.5H8" stroke="#4f5b73" stroke-width="1"/></svg>
<svg class="a" style="left:1004px;top:697px" width="9" height="5"><path d="M0 0 H9 L4.5 5Z" fill="#54617a"/></svg></body></html>
